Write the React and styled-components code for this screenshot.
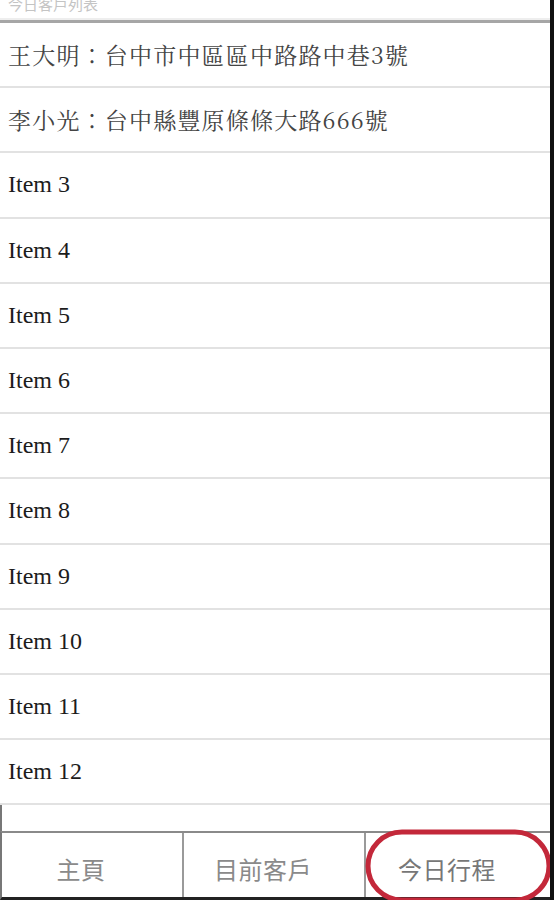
import React from "react";
import styled, { createGlobalStyle } from "styled-components";

const Global = createGlobalStyle`
  html, body { margin: 0; padding: 0; background: #fff; }
  body { font-family: "Liberation Serif", "Noto Sans CJK TC", serif; }
`;

const Screen = styled.div`
  position: relative;
  width: 554px;
  height: 900px;
  overflow: hidden;
  display: flex;
  box-sizing: border-box;
  border-right: 4px solid #111;
`;

const Main = styled.div`
  flex: 1;
  display: flex;
  flex-direction: column;
`;

const Header = styled.div`
  flex: none;
  height: 23px;
  box-sizing: border-box;
  border-bottom: 3px solid #a6a6a6;
  box-shadow: 0 -2px 0 #eee inset;
  padding-left: 8px;
  font-family: "Noto Sans CJK TC", sans-serif;
  font-size: 15px;
  line-height: 14px;
  color: #c4c4c4;
  overflow: hidden;
`;

const HeaderText = styled.div`
  margin-top: -3px;
`;

const List = styled.ul`
  list-style: none;
  margin: 0;
  padding: 0;
`;

const Row = styled.li`
  height: 63.2px;
  border-bottom: 2px solid #e2e2e2;
  display: flex;
  align-items: center;
  padding-left: 8px;
  font-family: ${(p) =>
    p.$cjk
      ? `"Noto Serif CJK TC", "Liberation Serif", "Noto Sans CJK TC", serif`
      : `"Liberation Serif", serif`};
  font-size: ${(p) => (p.$cjk ? "23px" : "24px")};
  letter-spacing: ${(p) => (p.$cjk ? "1.2px" : "0")};
  color: ${(p) => (p.$cjk ? "#444" : "#1c1c1c")};
`;

const Spacer = styled.div`
  flex: 1;
  border-left: 2px solid #777;
`;

const TabBar = styled.nav`
  flex: none;
  height: 64px;
  display: grid;
  grid-template-columns: 182px 182px 1fr;
  border-top: 2px solid #8a8a8a;
  border-left: 2px solid #777;
  border-bottom: 3px solid #222;
`;

const Tab = styled.div`
  display: flex;
  align-items: center;
  justify-content: center;
  padding-top: 6px;
  padding-right: 22px;
  font-family: "Noto Sans CJK TC", sans-serif;
  font-size: 24px;
  color: ${(p) => (p.$active ? "#777" : "#8a8a8a")};
  border-right: ${(p) => (p.$last ? "none" : "2px solid #9a9a9a")};
  letter-spacing: 0.5px;
`;

const Circle = styled.svg`
  position: absolute;
  left: 364px;
  top: 829px;
  pointer-events: none;
`;

const rows = [
  { t: "王大明：台中市中區區中路路中巷3號", cjk: true },
  { t: "李小光：台中縣豐原條條大路666號", cjk: true },
  ...Array.from({ length: 10 }, (_, i) => ({ t: `Item ${i + 3}` })),
];

export default function App() {
  return (
    <>
      <Global />
      <Screen>
        <Main>
          <Header>
            <HeaderText>今日客戶列表</HeaderText>
          </Header>
          <List>
            {rows.map((r, i) => (
              <Row key={i} $cjk={r.cjk}>
                {r.t}
              </Row>
            ))}
          </List>
          <Spacer />
          <TabBar>
            <Tab>主頁</Tab>
            <Tab>目前客戶</Tab>
            <Tab $last $active>今日行程</Tab>
          </TabBar>
        </Main>
        <Circle width="190" height="76" viewBox="0 0 190 76">
          <rect x="4" y="3" width="181" height="68" rx="34" ry="34" fill="none" stroke="#c3283a" strokeWidth="5" />
        </Circle>
      </Screen>
    </>
  );
}
